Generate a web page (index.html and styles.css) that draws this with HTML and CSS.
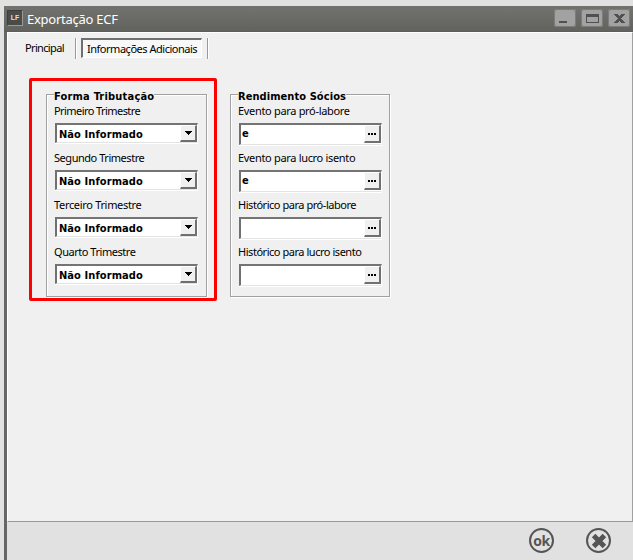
FILE: index.html
```html
<!DOCTYPE html>
<html lang="pt-BR">
<head>
<meta charset="utf-8">
<title>Exportação ECF</title>
<link rel="stylesheet" href="styles.css">
</head>
<body>
<div class="window">
  <header class="titlebar">
    <span class="logo">LF</span>
    <span class="title">Exportação ECF</span>
    <div class="controls">
      <span class="control"><svg width="22" height="18" shape-rendering="crispEdges"><path fill="#505050" d="M5 12h8v2H5z"/></svg></span>
      <span class="control"><svg width="22" height="18" shape-rendering="crispEdges"><path fill="#505050" fill-rule="evenodd" d="M5 5h13v9H5zM6 8v5h11V8z"/></svg></span>
      <span class="control"><svg width="22" height="18" shape-rendering="crispEdges"><path fill="#505050" d="M6 5h4v1h1v1h1V6h1V5h4v1h-1v1h-1v1h-1v1h-1v1h1v1h1v1h1v1h1v1h-4v-1h-1v-1h-1v1h-1v1H6v-1h1v-1h1v-1h1v-1h1V9H9V8H8V7H7V6H6z"/></svg></span>
    </div>
  </header>
  <main class="content">
    <nav class="tabs">
      <span class="tab"><span class="tab-text">Principal</span></span>
      <span class="tab selected"><span class="tab-text wide">Informações Adicionais</span></span>
    </nav>
    <div class="groups">
      <div class="highlight">
        <section class="group tax">
          <h2>Forma Tributação</h2>
          <div class="field"><label class="tightest">Primeiro Trimestre</label><div class="box combo"><b>Não Informado</b><span class="drop"><svg width="7" height="4" shape-rendering="crispEdges"><path d="M0 0h7v1H6v1H5v1H4v1H3V3H2V2H1V1H0z"/></svg></span></div></div>
          <div class="field"><label class="tight">Segundo Trimestre</label><div class="box combo"><b>Não Informado</b><span class="drop"><svg width="7" height="4" shape-rendering="crispEdges"><path d="M0 0h7v1H6v1H5v1H4v1H3V3H2V2H1V1H0z"/></svg></span></div></div>
          <div class="field"><label>Terceiro Trimestre</label><div class="box combo"><b>Não Informado</b><span class="drop"><svg width="7" height="4" shape-rendering="crispEdges"><path d="M0 0h7v1H6v1H5v1H4v1H3V3H2V2H1V1H0z"/></svg></span></div></div>
          <div class="field"><label class="tight">Quarto Trimestre</label><div class="box combo"><b>Não Informado</b><span class="drop"><svg width="7" height="4" shape-rendering="crispEdges"><path d="M0 0h7v1H6v1H5v1H4v1H3V3H2V2H1V1H0z"/></svg></span></div></div>
        </section>
      </div>
      <section class="group income">
        <h2>Rendimento Sócios</h2>
        <div class="field"><label>Evento para pró-labore</label><div class="box"><b>e</b><span class="more"><svg width="8" height="2" shape-rendering="crispEdges"><path d="M0 0h2v2H0zM3 0h2v2H3zM6 0h2v2H6z"/></svg></span></div></div>
        <div class="field"><label>Evento para lucro isento</label><div class="box"><b>e</b><span class="more"><svg width="8" height="2" shape-rendering="crispEdges"><path d="M0 0h2v2H0zM3 0h2v2H3zM6 0h2v2H6z"/></svg></span></div></div>
        <div class="field"><label class="tight">Histórico para pró-labore</label><div class="box"><b></b><span class="more"><svg width="8" height="2" shape-rendering="crispEdges"><path d="M0 0h2v2H0zM3 0h2v2H3zM6 0h2v2H6z"/></svg></span></div></div>
        <div class="field"><label class="tight">Histórico para lucro isento</label><div class="box"><b></b><span class="more"><svg width="8" height="2" shape-rendering="crispEdges"><path d="M0 0h2v2H0zM3 0h2v2H3zM6 0h2v2H6z"/></svg></span></div></div>
      </section>
    </div>
  </main>
  <footer class="footer">
    <span class="round"><span class="ok">ok</span></span>
    <span class="round"><svg width="16" height="16" viewBox="0 0 16 16"><path d="M2.6 2.6l10.8 10.8M13.4 2.6L2.6 13.4" stroke="#555" stroke-width="5"/></svg></span>
  </footer>
</div>
</body>
</html>
```

FILE: styles.css
```css
* { box-sizing: border-box; }
body {
  margin: 0;
  height: 560px;
  padding: 6px 0 0 4px;
  overflow: hidden;
  background: #e1e1e1;
  font: 11px/14px "DejaVu Sans Condensed", sans-serif;
  color: #000;
}
svg { display: block; }
.window {
  height: 554px;
  display: flex;
  flex-direction: column;
  border-left: 3px solid #666;
}
.titlebar {
  height: 26px;
  flex: none;
  margin-left: -3px;
  padding: 3px 3px 0 3px;
  display: flex;
  align-items: flex-start;
  background: linear-gradient(#72736e, #62635e);
  border-bottom: 1px solid #5e5f5b;
}
.logo {
  width: 16px;
  height: 16px;
  margin-top: 1px;
  background: #4c4b4c;
  border: 1px solid #3e3e3e;
  border-right-color: #999;
  border-bottom-color: #999;
  color: #ddd;
  font: bold 7px/14px "Liberation Sans", sans-serif;
  text-align: center;
}
.title {
  margin-left: 4px;
  color: #fff;
  font: 13px/20px "Noto Sans", sans-serif;
  letter-spacing: -.25px;
}
.controls { margin-left: auto; display: flex; gap: 5px; }
.control {
  width: 22px;
  height: 18px;
  background: #a2a2a2;
  border-radius: 3px;
  box-shadow: inset 0 0 0 1px #7c7c7a;
}
.content {
  height: 490px;
  flex: none;
  background: #f0f0f0;
  border-top: 1px solid #fff;
  border-left: 1px solid #fff;
  border-right: 1px solid #a0a0a0;
  border-bottom: 1px solid #999;
}
.tabs { display: flex; padding: 5px 0 0 4px; height: 28px; }
.tab {
  width: 64px;
  height: 21px;
  padding: 2px 0 0 13px;
  border-right: 1px solid #999;
  box-shadow: 1px 0 #fff;
  white-space: nowrap;
  font: 11px/16px "Noto Sans", sans-serif;
}
.tab.selected { width: 132px; padding: 0 5px 0 5px; }
.tab.selected .tab-text {
  display: block;
  width: 121px;
  height: 20px;
  padding: 1px 0 0 4px;
  background: #f8f8f8;
  border: 1px solid #fff;
  border-top: 2px solid #707070;
  border-left: 2px solid #707070;
}
.tab-text { letter-spacing: -.65px; }
.tab-text.wide { letter-spacing: -.48px; }
.groups { display: flex; padding: 17px 0 0 21px; }
.highlight {
  width: 188px;
  height: 223px;
  border: 3px solid #f00;
  border-radius: 2px;
  padding: 13px 0 0 14px;
}
.group {
  width: 161px;
  height: 203px;
  padding: 0 8px;
  border: 1px solid #a0a0a0;
  box-shadow: 1px 1px #fff, inset 1px 1px #fff;
}
.income { width: 160px; margin: 16px 0 0 13px; }
h2 {
  width: max-content;
  height: 14px;
  margin: -5px 0 0 -1px;
  background: #f0f0f0;
  font: bold 11px/14px "DejaVu Sans Condensed", sans-serif;
  letter-spacing: .07px;
  white-space: nowrap;
}
.tax h2 { letter-spacing: .2px; }
.field { display: flow-root; height: 47px; }
label {
  display: block;
  height: 19px;
  margin-left: -1px;
  font: 11px/14px "Noto Sans", sans-serif;
  letter-spacing: -.32px;
  white-space: nowrap;
}
.tight { letter-spacing: -.46px; }
.tightest { letter-spacing: -.57px; }
.box {
  width: 143px;
  height: 22px;
  display: flex;
  background: #fff;
  border: 2px solid #707070;
  border-top-color: #747474;
  border-right: 1px solid #fff;
  border-bottom: 1px solid #e3e3e3;
  box-shadow: 0 1px #fff;
}
.combo { height: 20px; }
.box b { flex: 1; padding: 2px 0 0 1px; line-height: 14px; }
.combo b { padding: 3px 0 0 2px; letter-spacing: .08px; white-space: nowrap; }
.drop, .more {
  width: 17px;
  height: 18px;
  display: flex;
  align-items: center;
  justify-content: center;
  background: #f0f0f0;
  border: 1px solid #fff;
  border-right: 2px solid #707070;
  border-bottom: 2px solid #707070;
}
.drop { height: 17px; }
.footer {
  flex: 1;
  display: flex;
  justify-content: flex-end;
  align-items: flex-start;
  gap: 32px;
  padding: 6px 22px 0 0;
}
.round {
  width: 25px;
  height: 25px;
  display: flex;
  align-items: center;
  justify-content: center;
  border: 2px solid #555;
  border-radius: 50%;
  color: #555;
}
.ok {
  font: bold 14px/18px "Open Sans", sans-serif;
  letter-spacing: -.3px;
}
```
